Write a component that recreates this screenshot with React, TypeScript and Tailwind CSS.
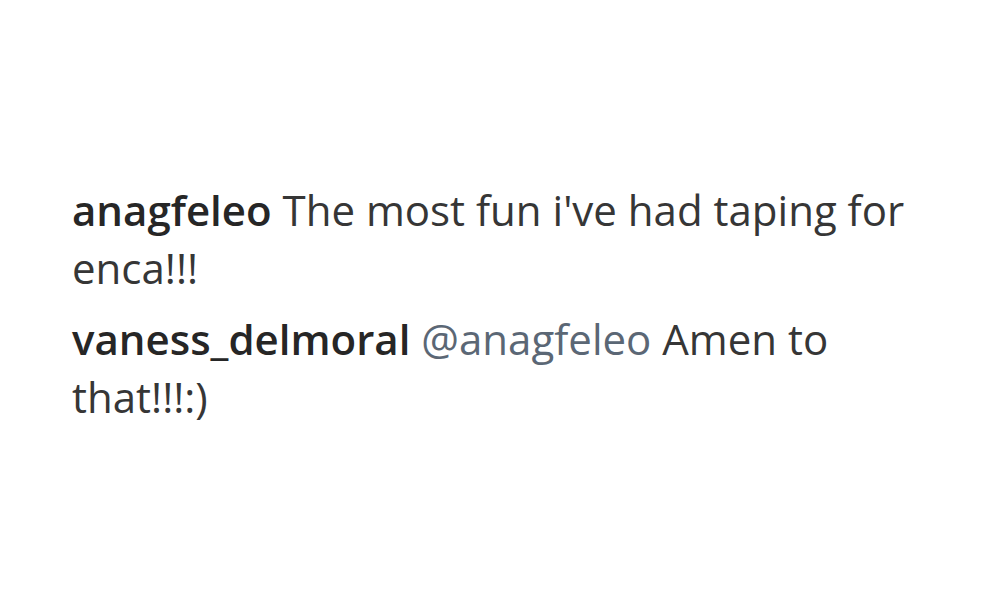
import React from 'react';

interface CommentProps {
  user: string;
  mention?: string;
  text: string;
}

function Comment({ user, mention, text }: CommentProps) {
  return (
    <p className="text-[42px] leading-[58px] text-[#363636]">
      <span className="font-semibold text-[#262626]">{user}</span>{' '}
      {mention && <span className="text-[#5b6775]">{mention} </span>}
      {text}
    </p>
  );
}

export default function App() {
  return (
    <div
      className="w-[1000px] h-[611px] bg-white overflow-hidden pt-[181px] pl-[72px]"
      style={{ fontFamily: '"Open Sans", "Liberation Sans", sans-serif' }}
    >
      <div className="w-[860px] flex flex-col gap-[13px]">
        <Comment user="anagfeleo" text="The most fun i've had taping for enca!!!" />
        <Comment user="vaness_delmoral" mention="@anagfeleo" text="Amen to that!!!:)" />
      </div>
    </div>
  );
}
